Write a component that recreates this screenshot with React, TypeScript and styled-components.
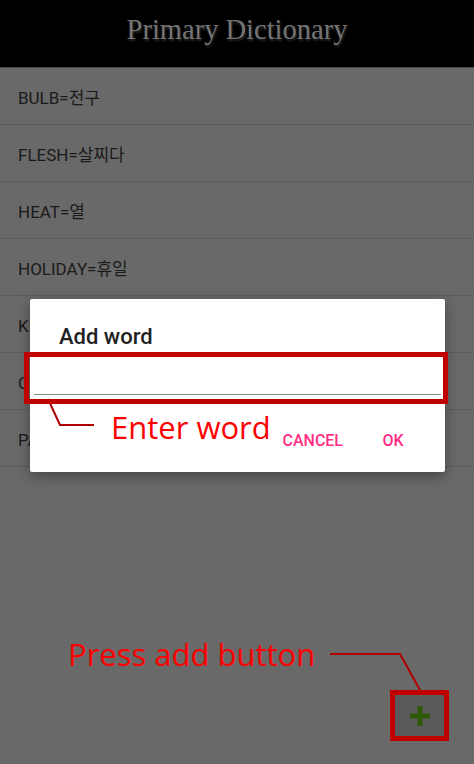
import React from 'react'
import styled, { createGlobalStyle } from 'styled-components'

const GlobalStyle = createGlobalStyle`
  html, body {
    margin: 0;
    padding: 0;
    background: #696969;
  }
  * { box-sizing: border-box; }
`

const Screen = styled.div`
  position: relative;
  width: 474px;
  height: 764px;
  overflow: hidden;
  background: #696969;
  font-family: Roboto, "Noto Sans CJK KR", sans-serif;
`

const TitleBar = styled.header`
  height: 68px;
  background: #000;
  border-bottom: 1px solid #4a4a4a;
  display: flex;
  justify-content: center;
`

const Title = styled.h1`
  margin: 0;
  padding-top: 13px;
  font-family: "Liberation Serif", serif;
  font-weight: normal;
  font-size: 28.5px;
  line-height: 33px;
  color: #747474;
  text-shadow: 1px 2px 2px #262626;
`

const WordList = styled.ul`
  list-style: none;
  margin: 0;
  padding: 0;
`

const WordRow = styled.li`
  height: 57px;
  padding-left: 18px;
  display: flex;
  align-items: center;
  border-bottom: 1px solid #5c5c5c;
  font-size: 17px;
  color: #1a1a1a;
`

const Dialog = styled.div`
  position: absolute;
  left: 30px;
  top: 299px;
  width: 415px;
  height: 173px;
  background: #fff;
  border-radius: 2px;
  box-shadow: 0 4px 14px rgba(0, 0, 0, 0.35);
  display: flex;
  flex-direction: column;
`

const DialogTitle = styled.h2`
  margin: 0;
  padding: 25px 0 0 29px;
  font-size: 22px;
  line-height: 26px;
  font-weight: 500;
  color: #212121;
`

const WordInput = styled.input`
  margin: 0 4px;
  height: 45px;
  border: none;
  border-bottom: 1px solid #8a8a8a;
  outline: none;
  background: transparent;
  font-family: inherit;
  font-size: 17px;
`

const ButtonRow = styled.div`
  display: flex;
  justify-content: flex-end;
  gap: 10px;
  padding: 28px 20px 0 0;
`

const TextButton = styled.button`
  min-width: 64px;
  height: 36px;
  padding: 0 8px;
  border: none;
  background: transparent;
  font-family: Roboto, sans-serif;
  font-size: 16px;
  font-weight: 500;
  line-height: 36px;
  color: #ff2d84;
`

const Fab = styled.button`
  position: absolute;
  left: 395px;
  top: 695px;
  width: 49px;
  height: 41px;
  border: none;
  background: #5a5a5a;
  display: flex;
  align-items: center;
  justify-content: center;
  padding: 0;
`

const Callout = styled.div<{ $l: number; $t: number; $w: number; $h: number }>`
  position: absolute;
  left: ${p => p.$l}px;
  top: ${p => p.$t}px;
  width: ${p => p.$w}px;
  height: ${p => p.$h}px;
  border: 5px solid #c00000;
  pointer-events: none;
`

const Note = styled.span<{ $l: number; $t: number }>`
  position: absolute;
  left: ${p => p.$l}px;
  top: ${p => p.$t}px;
  font-family: "Open Sans", sans-serif;
  font-size: 31px;
  line-height: 31px;
  color: #ff0000;
  white-space: nowrap;
`

const Leaders = styled.svg`
  position: absolute;
  left: 0;
  top: 0;
  pointer-events: none;
`

const words = [
  'BULB=전구',
  'FLESH=살찌다',
  'HEAT=열',
  'HOLIDAY=휴일',
  'KEY=열쇠',
  'CUP=컵',
  'PAPER=종이',
]

const App = () => {
  return (
    <Screen>
      <GlobalStyle />
      <TitleBar>
        <Title>Primary Dictionary</Title>
      </TitleBar>
      <WordList>
        {words.map(w => (
          <WordRow key={w}>{w}</WordRow>
        ))}
      </WordList>

      <Dialog>
        <DialogTitle>Add word</DialogTitle>
        <WordInput />
        <ButtonRow>
          <TextButton>CANCEL</TextButton>
          <TextButton>OK</TextButton>
        </ButtonRow>
      </Dialog>

      <Fab>
        <svg width="22" height="22" viewBox="0 0 22 22">
          <path d="M11 1v20M1 11h20" stroke="#2d5a07" strokeWidth="5" />
        </svg>
      </Fab>

      {/* tutorial annotations on top of the screenshot */}
      <Leaders width="474" height="764">
        <polyline points="48,399 60,425 94,425" fill="none" stroke="#b00000" strokeWidth="2" />
        <polyline points="330,654 400,654 420,690" fill="none" stroke="#b00000" strokeWidth="2" />
      </Leaders>
      <Callout $l={24} $t={352} $w={424} $h={52} />
      <Callout $l={390} $t={690} $w={59} $h={51} />
      <Note $l={111} $t={412}>Enter word</Note>
      <Note $l={68} $t={639}>Press add button</Note>
    </Screen>
  )
}

export default App
